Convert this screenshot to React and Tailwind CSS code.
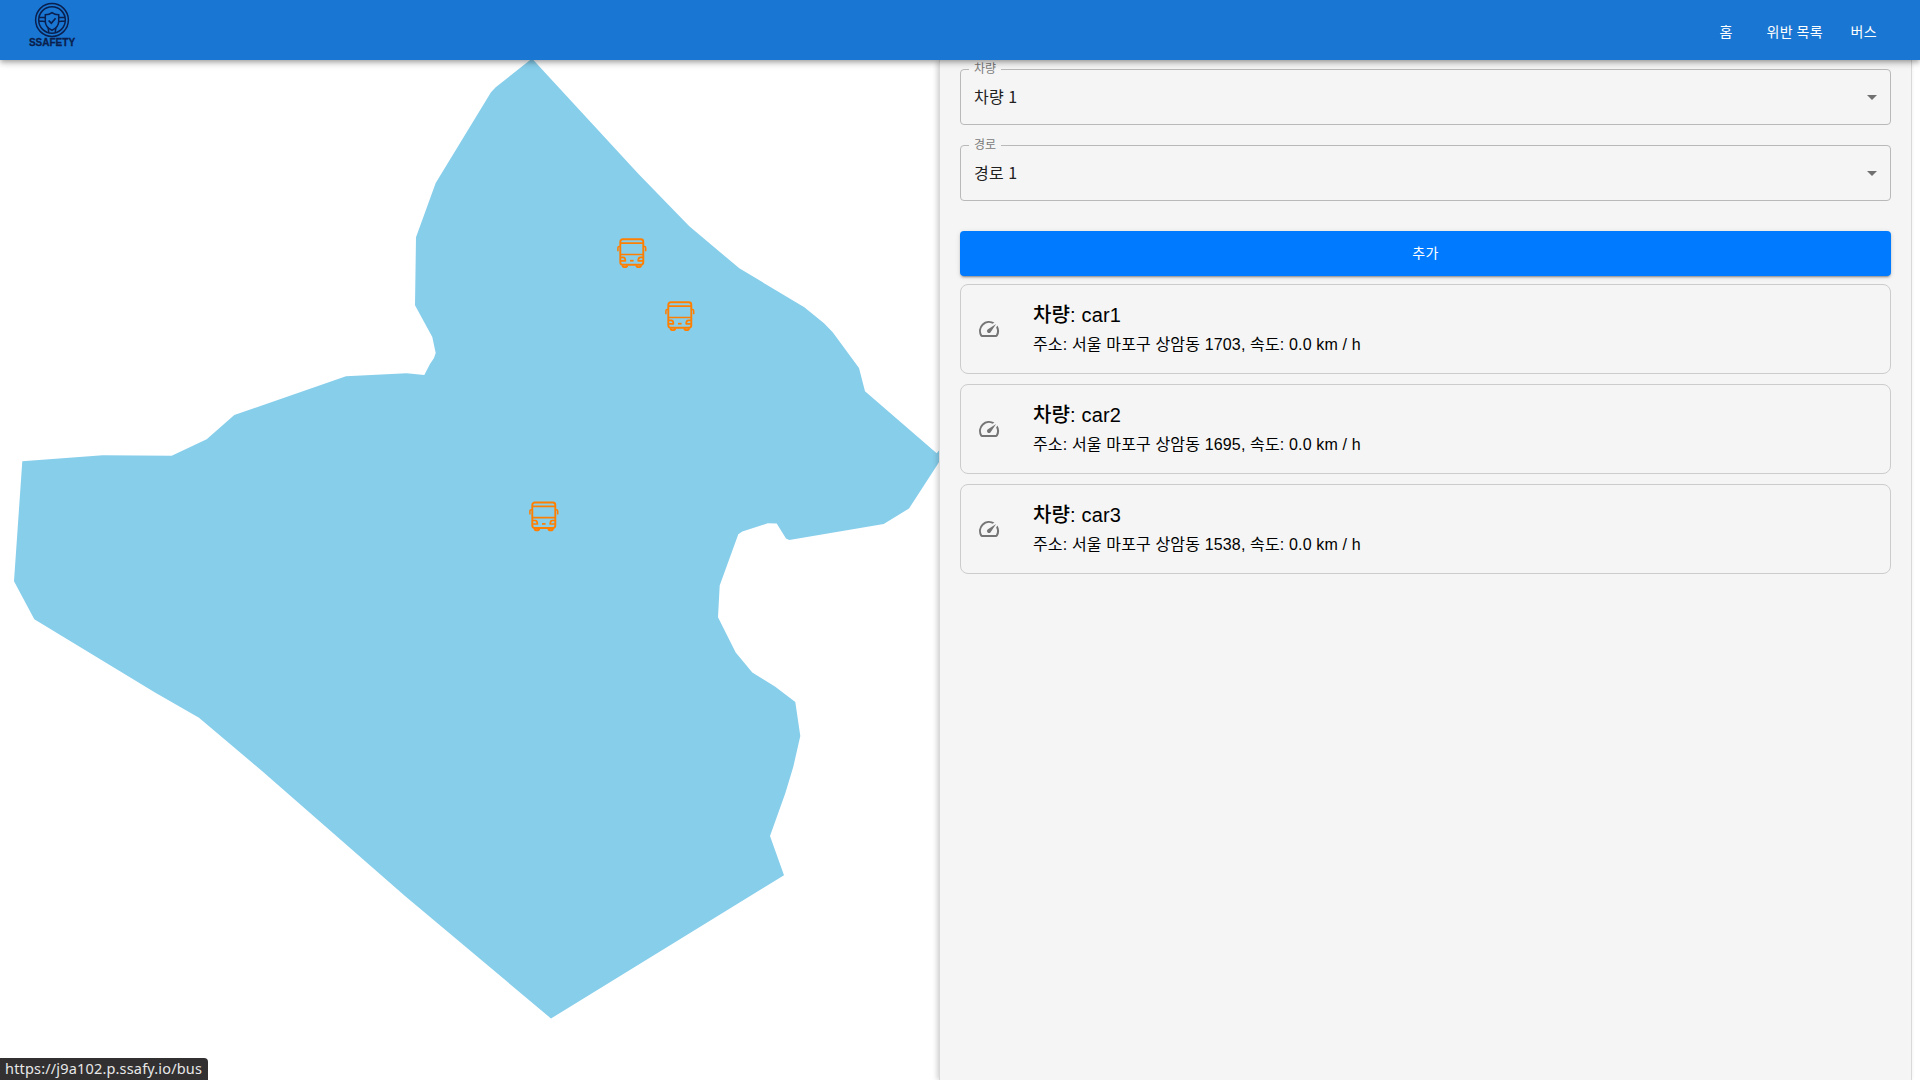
const SANS = "font-['Liberation_Sans','Noto_Sans_CJK_KR',sans-serif]";
const NOTO = "font-['Noto_Sans_CJK_KR',sans-serif]";

const buses = [
  { id: 1, x: 617, y: 238.3 },
  { id: 2, x: 665, y: 301.3 },
  { id: 3, x: 529, y: 501.5 },
];

const cars = [
  { name: "car1", lot: "1703" },
  { name: "car2", lot: "1695" },
  { name: "car3", lot: "1538" },
];

const district =
  "532,58.5 495.7,87.3 491,92.3 435.7,183 416,237.3 415,305.3 432.3,337 435.7,353 434,358 430,364 424.3,375 406.7,373.3 346,376.3 234.3,415 206.7,439.3 171.7,455.7 102.7,455.3 22.3,461.3 14,581.3 34.3,619.3 155,692.5 199,717.7 262,771 405,896 551,1018.5 784,875.2 770,835.9 785.3,793.2 793.3,766.7 800.3,736 795.3,702 775.3,686.8 752.3,672.4 735.7,652.4 718,617.3 719.7,585.6 738.3,534.3 742.3,531.5 767.7,523.3 776.7,523.6 786,538.4 789.3,540 883.7,524 909,508.4 945,453 945,443 936.7,453.3 865,391.3 859,368 832.7,332.3 824,323.3 804.3,307.3 739.3,268.3 689.3,226.3 638.3,173.7";

function Logo() {
  return (
    <div className="ml-[29px] flex w-[46px] flex-col items-center pt-[2px]">
      <svg width="36" height="36" viewBox="0 0 36 36" className="shrink-0" fill="none" stroke="#0a1f4d" strokeWidth="1.500">
        <circle cx="18" cy="18" r="16.400" />
        <circle cx="18" cy="18" r="13.300" />
        <path d="M5 15.500h7M24 15.500h7M5 19.200h4c3 0 4.500 3 5 6l.8 5.200M31 19.200h-4c-3 0-4.500 3-5 6l-.8 5.200" />
        <path d="M18 10.700c-2 1.600-4.300 2.100-6.700 2.100v6.400c0 4.800 3 7.400 6.700 9.100 3.700-1.700 6.700-4.300 6.700-9.100v-6.400c-2.400 0-4.700-.5-6.700-2.100z" fill="#1976d2" />
        <path d="M14.600 18.500l2.700 2.700 4.300-5" strokeWidth="1.700" />
      </svg>
      <span className="-mt-[1px] font-['Liberation_Sans',sans-serif] text-[10px] leading-[11px] font-bold whitespace-nowrap text-[#0a1f4d] [-webkit-text-stroke:0.3px_#0a1f4d]">
        SSAFETY
      </span>
    </div>
  );
}

function Bus({ x, y }) {
  return (
    <g transform={`translate(${x} ${y})`} fill="none" stroke="#ff7f00" strokeWidth="1.900" strokeLinejoin="round">
      <rect x="3.300" y="1" width="23" height="25.500" rx="2.500" />
      <path d="M3.500 4.900h22.600M3.500 16.200h22.600" strokeWidth="1.700" />
      <path d="M3.500 19h2.700c1.500 0 2.200 1.200 2.200 3.500H3.500M26.100 19h-2.700c-1.500 0-2.200 1.200-2.200 3.500h4.900" strokeWidth="1.700" />
      <path d="M13 22.400h3.600" strokeWidth="1.700" />
      <path d="M5.500 27c.4 2.400 4.400 2.400 4.800 0M19.300 27c.4 2.400 4.400 2.400 4.800 0" />
      <path d="M3 8.200H2.200Q.9 8.200.9 9.500V13M26.600 8.200h.8q1.300 0 1.300 1.300V13" strokeWidth="1.500" />
    </g>
  );
}

function Select({ label, value }) {
  return (
    <fieldset className="relative h-[61px] w-full rounded border border-[#b9b9b9] px-[8px]">
      <legend className="flex h-[11px] items-center px-[5px]">
        <span className={`${NOTO} relative -top-[2px] h-[17px] text-[12px] leading-[17px] whitespace-nowrap text-[#7a7a7a]`}>{label}</span>
      </legend>
      <div className="flex h-[43px] items-center justify-between pl-[5px]">
        <span className={`${NOTO} pb-[2px] text-[16px] leading-[24px] tracking-[0.4px] text-[#212121]`}>{value}</span>
        <svg width="24" height="24" viewBox="0 0 24 24" className="-mr-[2px]" fill="#707070">
          <path d="M7 10l5 5 5-5z" />
        </svg>
      </div>
    </fieldset>
  );
}

function CarCard({ name, lot }) {
  return (
    <li className="flex h-[90px] items-center rounded-lg border border-[#cccccc] pl-[16px]">
      <svg width="24" height="24" viewBox="0 0 24 24" fill="#757575">
        <path d="m20.380 8.570-1.230 1.850a8 8 0 0 1-.22 7.580H5.070A8 8 0 0 1 15.580 6.850l1.850-1.230A10 10 0 0 0 3.350 19a2 2 0 0 0 1.720 1h13.850a2 2 0 0 0 1.740-1 10 10 0 0 0-.27-10.440z" />
        <path d="M10.590 15.410a2 2 0 0 0 2.830 0l5.660-8.490-8.490 5.660a2 2 0 0 0 0 2.830z" />
      </svg>
      <div className={`${SANS} ml-[32px] flex flex-col text-black`}>
        <span className="text-[20px] leading-[30px] tracking-[0.15px]"><b className="font-medium">차량</b>: {name}</span>
        <span className="-mb-[2px] text-[16px] leading-[30px] tracking-[0.15px]">주소: 서울 마포구 상암동 {lot}, 속도: 0.0 km / h</span>
      </div>
    </li>
  );
}

export default function App() {
  return (
    <div className="relative flex h-[1080px] w-[1920px] flex-col overflow-hidden bg-white">
      <header className="z-10 flex h-[60px] shrink-0 justify-between bg-[#1976d2] shadow-[0_2px_4px_-1px_rgba(0,0,0,0.2),0_4px_5px_0_rgba(0,0,0,0.14),0_1px_10px_0_rgba(0,0,0,0.12)]">
        <Logo />
        <nav className={`${NOTO} flex items-center pt-[2px] pr-[43px] text-[14px] leading-[24px] tracking-[0.4px] text-white`}>
          <a className="w-[47px]">홈</a>
          <a className="w-[84px]">위반 목록</a>
          <a>버스</a>
        </nav>
      </header>
      <main className="flex min-h-0 flex-1">
        <svg width="939" height="1020" viewBox="0 60 939 1020" className="shrink-0">
          <polygon points={district} fill="#87ceeb" />
          {buses.map((b) => (
            <Bus key={b.id} x={b.x} y={b.y} />
          ))}
        </svg>
        <section className="flex w-[973px] shrink-0 flex-col border-x border-[#d9d9d9] bg-[#f5f5f5] px-[20px] pt-[4px] shadow-[-2px_0_5px_rgba(0,0,0,0.18)]">
          <div className="flex flex-col gap-[15px]">
            <Select label="차량" value="차량 1" />
            <Select label="경로" value="경로 1" />
          </div>
          <button className={`${NOTO} mt-[30px] h-[45px] shrink-0 rounded bg-[#007bff] pb-[2px] text-[14px] tracking-[0.4px] text-white shadow-[0_3px_1px_-2px_rgba(0,0,0,0.2),0_2px_2px_0_rgba(0,0,0,0.14),0_1px_5px_0_rgba(0,0,0,0.12)]`}>
            추가
          </button>
          <ul className="mt-[8px] flex flex-col gap-[10px]">
            {cars.map((c) => (
              <CarCard key={c.name} {...c} />
            ))}
          </ul>
        </section>
      </main>
      <div className="absolute bottom-0 left-0 z-20 flex h-[22px] w-[208px] items-center rounded-tr bg-[#323031] pl-[5px] font-['Noto_Sans',sans-serif] text-[14.500px] tracking-[0.170px] whitespace-nowrap text-[#e8e8e8]">
        https://j9a102.p.ssafy.io/bus
      </div>
    </div>
  );
}
